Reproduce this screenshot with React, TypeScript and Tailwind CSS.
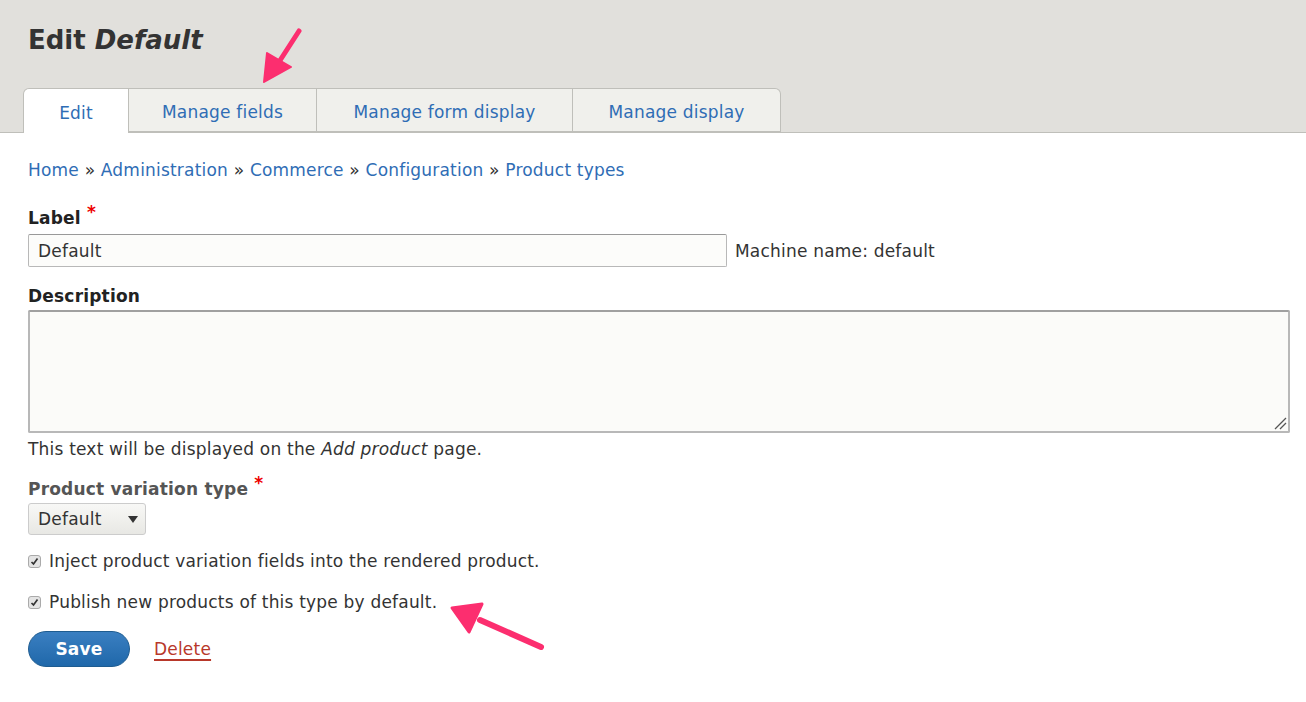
const tabs = ['Edit', 'Manage fields', 'Manage form display', 'Manage display']

function App() {
  return (
    <main className="relative min-h-[702px] bg-white text-[17px] leading-[24px] tracking-[0.2px] text-[#333] [font-family:'DejaVu_Sans',sans-serif]">
      <header className="border-b border-[#bfbfba] bg-[#e1e0dc] pl-[23px]">
        <h1 className="pb-[30px] pl-[5px] pt-[22px] text-[26px] leading-[36px] font-bold tracking-normal text-[#333]">
          Edit <em>Default</em>
        </h1>
        <nav className="-mb-px flex">
          {tabs.map((t, i) => (
            <a
              key={t}
              className={
                i === 0
                  ? 'flex h-[45px] w-[106px] items-center justify-center rounded-tl-[6px] border border-b-0 border-[#bfbfba] bg-white pt-[3px] text-[#2f6db5]'
                  : i === 3
                    ? 'flex h-[44px] w-[208px] items-center justify-center rounded-tr-[6px] border border-l-0 border-[#bfbfba] bg-[#f0f0ec] pt-[3px] text-[#2f6db5]'
                    : 'flex h-[44px] items-center justify-center border border-l-0 border-[#bfbfba] bg-[#f0f0ec] pt-[3px] text-[#2f6db5] ' +
                      (i === 1 ? 'w-[188px]' : 'w-[256px]')
              }
            >
              {t}
            </a>
          ))}
        </nav>
      </header>

      <div className="px-[28px]">
        <nav className="mt-[25px] text-[#2f6db5]">
          <a>Home</a> <span className="text-[#333]">»</span> <a>Administration</a>{' '}
          <span className="text-[#333]">»</span> <a>Commerce</a> <span className="text-[#333]">»</span>{' '}
          <a>Configuration</a> <span className="text-[#333]">»</span> <a>Product types</a>
        </nav>

        <div className="mt-[24px]">
          <label className="font-bold text-[#222]">
            Label <span className="relative -top-[6px] text-[#e00]">*</span>
          </label>
          <div className="mt-[4px] flex items-center gap-[8px]">
            <div className="flex h-[33px] w-[699px] items-center rounded-[2px] border border-[#b8b8b8] border-t-[#999] bg-[#fcfcfa] px-[9px] text-[#333]">
              Default
            </div>
            <span>Machine name: default</span>
          </div>
        </div>

        <div className="mt-[17px]">
          <label className="font-bold text-[#222]">Description</label>
          <div className="relative mt-[2px] h-[123px] w-[1262px] rounded-[2px] border-2 border-[#b8b8b8] border-t-[#a0a0a0] bg-[#fbfbf9]">
            <svg className="absolute bottom-[1px] right-[1px]" width="14" height="14" viewBox="0 0 14 14">
              <path d="M2 13 L13 2 M7 13 L13 7" stroke="#555" strokeWidth="1.3" />
            </svg>
          </div>
          <p className="mt-[4px] text-[#333]">
            This text will be displayed on the <em>Add product</em> page.
          </p>
        </div>

        <div className="mt-[16px]">
          <label className="font-bold text-[#555]">
            Product variation type <span className="relative -top-[6px] text-[#e00]">*</span>
          </label>
          <div className="mt-[2px] flex h-[32px] w-[118px] items-center justify-between rounded-[3px] border border-[#ccc] bg-gradient-to-b from-[#f8f8f6] to-[#e8e8e4] pl-[9px] pr-[6px]">
            <span>Default</span>
            <svg width="12" height="9" viewBox="0 0 12 9">
              <path d="M1 1 L11 1 L6 8 Z" fill="#333" />
            </svg>
          </div>
        </div>

        <Check className="mt-[14px]" label="Inject product variation fields into the rendered product." />
        <Check className="mt-[17px]" label="Publish new products of this type by default." />

        <div className="mt-[17px] flex items-center gap-[24px]">
          <button className="h-[36px] w-[102px] rounded-[18px] border border-[#1e5c90] bg-gradient-to-b from-[#3a7fc1] to-[#1f68aa] font-bold text-white">
            Save
          </button>
          <a className="text-[#b8382a] underline decoration-[1.5px] underline-offset-[4px]">Delete</a>
        </div>
      </div>

      <svg className="pointer-events-none absolute left-0 top-0" width="1306" height="702">
        <path d="M299 31 L279 62" stroke="#fc2e6f" strokeWidth="5" strokeLinecap="round" />
        <path d="M264 82 L267 53 L291 67 Z" fill="#fc2e6f" stroke="#fc2e6f" strokeWidth="2" strokeLinejoin="round" />
        <path d="M541 647 L480 620" stroke="#fc2e6f" strokeWidth="6" strokeLinecap="round" />
        <path d="M452 608 L482 604 L469 632 Z" fill="#fc2e6f" stroke="#fc2e6f" strokeWidth="3" strokeLinejoin="round" />
      </svg>
    </main>
  )
}

function Check({ label, className }: { label: string; className: string }) {
  return (
    <div className={'flex items-center gap-[8px] ' + className}>
      <span className="flex h-[13px] w-[13px] items-center justify-center rounded-[3px] border border-[#aaa] bg-[#e4e4e4]">
        <svg width="9" height="9" viewBox="0 0 9 9">
          <path d="M1.5 5 L3.5 7 L7.5 1.5" stroke="#333" strokeWidth="1.7" fill="none" />
        </svg>
      </span>
      <span>{label}</span>
    </div>
  )
}

export default App
